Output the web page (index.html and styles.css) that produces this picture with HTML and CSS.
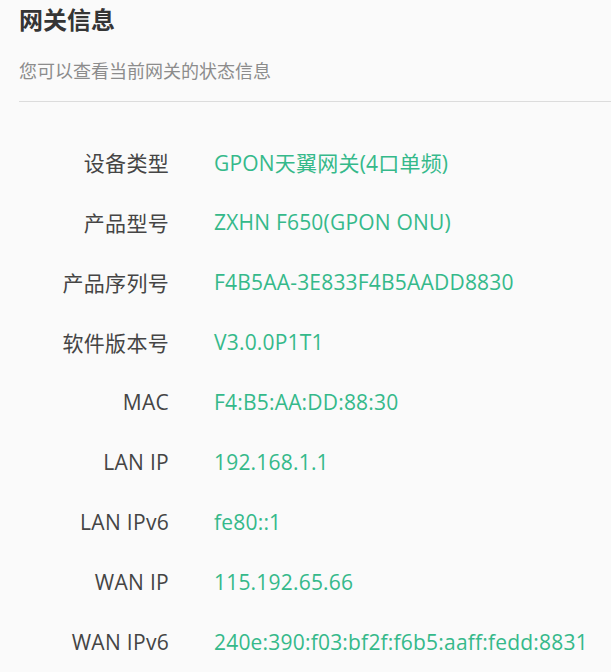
FILE: index.html
```html
<!DOCTYPE html>
<html lang="zh-CN">
<head>
<meta charset="utf-8">
<title>网关信息</title>
<link rel="stylesheet" href="styles.css">
</head>
<body>
<div class="page">
  <h1 class="title">网关信息</h1>
  <p class="subtitle">您可以查看当前网关的状态信息</p>
  <div class="divider"></div>
  <dl class="info">
    <div class="row"><dt>设备类型</dt><dd>GPON天翼网关(4口单频)</dd></div>
    <div class="row"><dt>产品型号</dt><dd>ZXHN F650(GPON ONU)</dd></div>
    <div class="row"><dt>产品序列号</dt><dd>F4B5AA-3E833F4B5AADD8830</dd></div>
    <div class="row"><dt>软件版本号</dt><dd>V3.0.0P1T1</dd></div>
    <div class="row"><dt>MAC</dt><dd>F4:B5:AA:DD:88:30</dd></div>
    <div class="row"><dt>LAN IP</dt><dd>192.168.1.1</dd></div>
    <div class="row"><dt>LAN IPv6</dt><dd>fe80::1</dd></div>
    <div class="row"><dt>WAN IP</dt><dd>115.192.65.66</dd></div>
    <div class="row"><dt>WAN IPv6</dt><dd>240e:390:f03:bf2f:f6b5:aaff:fedd:8831</dd></div>
  </dl>
</div>
</body>
</html>
```
FILE: styles.css
```css
html, body {
  margin: 0;
  padding: 0;
  background: #fafafa;
}
body {
  font-family: "Open Sans", "Noto Sans CJK SC", sans-serif;
  color: #444;
  overflow: hidden;
}
.page {
  padding: 4px 0 0 19px;
}
.title {
  margin: 0;
  font-size: 24px;
  font-weight: 700;
  line-height: 30px;
  color: #353535;
  font-family: "Noto Sans CJK SC", sans-serif;
}
.subtitle {
  margin: 23px 0 0;
  font-size: 18px;
  line-height: 26px;
  color: #8c8c8c;
  font-family: "Noto Sans CJK SC", sans-serif;
}
.divider {
  margin-top: 18px;
  height: 1px;
  background: #dcdcdc;
}
.info {
  margin: 30px 0 0;
}
.row {
  display: flex;
  align-items: center;
  height: 60px;
}
.row dt {
  width: 150px;
  text-align: right;
  font-size: 21px;
  letter-spacing: 0.3px;
  color: #454545;
  white-space: nowrap;
}
.row dd {
  margin: 0 0 0 45px;
  font-size: 21px;
  letter-spacing: 0.2px;
  color: #35b98a;
  white-space: nowrap;
}
```
